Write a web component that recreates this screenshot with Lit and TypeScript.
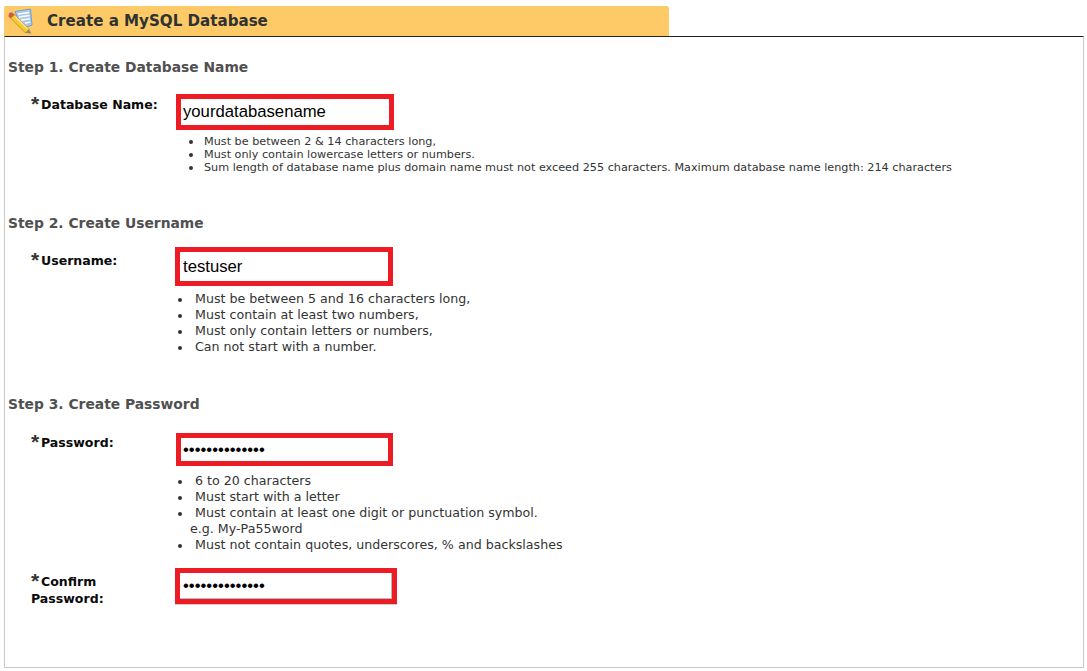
import { LitElement, html, css } from "lit";
import { customElement } from "lit/decorators.js";

@customElement("app-root")
export class AppRoot extends LitElement {
  static styles = css`
    :host { display: block; width: 1087px; height: 671px; background: #fff; font-family: "DejaVu Sans", Verdana, sans-serif; overflow: hidden; }
    .page { box-sizing: border-box; height: 668px; margin-left: 4px; width: 1080px; padding-top: 6px; display: flex; flex-direction: column; }
    .tab { box-sizing: border-box; width: 665px; height: 30px; flex: none; background: #fdca67; border-radius: 2px 3px 0 0; display: flex; align-items: center; gap: 14px; padding-left: 3px; color: #2f3233; font-size: 15.1px; font-weight: 700; }
    .tab svg { display: block; flex: none; }
    .panel { flex: 1; box-sizing: border-box; border: 1px solid #c8c8c8; border-top: 1px solid #222; padding: 22px 0 0 3px; }
    h2 { margin: 0; font-size: 13.85px; line-height: 16px; font-weight: 700; color: #505050; }
    .field { display: grid; grid-template-columns: 145px 1fr; margin-left: 23px; }
    .label { font-size: 12.55px; line-height: 17px; font-weight: 700; color: #0a0a0a; }
    .star { font-size: 21px; line-height: 10px; font-weight: 700; color: #333; display: inline-block; width: 10px; vertical-align: -2px; font-family: "Liberation Sans", sans-serif; }
    .box { box-sizing: border-box; display: block; border: 5px solid #ed1c24; background: #fff; padding: 0 0 0 2px; margin: 0; outline: none; border-radius: 0; font-family: "Liberation Sans", Arial, sans-serif; font-size: 16.7px; color: #000; }
    .b1 { width: 218px; height: 36px; }
    .b2 { width: 218px; height: 39px; margin-left: -1px; padding-left: 3px; }
    .b3 { width: 217px; height: 33px; }
    .b4 { width: 222px; height: 36px; margin-left: -1px; padding-left: 3px; box-shadow: inset -1px -1px 0 #bbb, 0 1px 0 #ccc; }
    ul { margin: 0; padding: 0; list-style: none; color: #333; }
    li { position: relative; }
    li::before { content: ""; position: absolute; border-radius: 50%; background: #333; }
    .small { margin-top: 5px; padding-left: 28px; font-size: 11.22px; line-height: 13px; }
    .small li::before { width: 4px; height: 4px; left: -15px; top: 5px; }
    .big { padding-left: 19px; font-size: 12.65px; line-height: 16px; }
    .big li::before { width: 4px; height: 4px; left: -17px; top: 7px; }
    .big li.note::before { display: none; }
    .big li.note { margin-left: -5px; }
    .l2 { margin-top: 5px; }
    .l3 { margin-top: 7px; }
    .s2 { margin-top: 41px; }
    .s3 { margin-top: 41px; }
    .f1 { margin-top: 19px; }
    .f2 { margin-top: 16px; }
    .f3 { margin-top: 21px; }
    .f4 { margin-top: 15px; }
    .lb1 { padding-top: 2px; }
    .lb2 { padding-top: 5px; }
    .lb3 { padding-top: 1px; }
    .lb4 { padding-top: 5px; }
  `;

  private star() {
    return html`<span class="star">*</span>`;
  }

  render() {
    return html`
      <div class="page">
        <div class="tab">
          <svg width="26" height="26" viewBox="0 0 26 26">
            <path d="M8 3.5 L23.5 1 L25 17 L20 19 L12 14 Z" fill="#a9c8ea" stroke="#6f9fd2" stroke-width="1"/>
            <path d="M11 6 L22 4.5 M12 9 L22.5 7.5 M14 12 L23 10.8 M18 15 L23.3 14.2" stroke="#fff" stroke-width="1.3"/>
            <path d="M7 6.5 L22 21.5 L18.5 25 L3.5 10 Z" fill="#f6c82e" stroke="#b98a1e" stroke-width="0.8"/>
            <path d="M3.5 10 L2 8.5 Q1.5 6.5 3 5 Q5 3.8 7 6.5 Z" fill="#e2574c" stroke="#a8433b" stroke-width="0.6"/>
            <path d="M8 8.5 L20.5 21" stroke="#fbe68a" stroke-width="1.4"/>
            <path d="M22 21.5 L24.5 25.5 L18.5 25 Z" fill="#8d8778"/>
          </svg>
          <span>Create a MySQL Database</span>
        </div>
        <div class="panel">
          <h2>Step 1. Create Database Name</h2>
          <div class="field f1">
            <div class="label lb1">${this.star()}Database Name:</div>
            <div>
              <input class="box b1" .value=${"yourdatabasename"} />
              <ul class="small">
                <li>Must be between 2 &amp; 14 characters long,</li>
                <li>Must only contain lowercase letters or numbers.</li>
                <li>Sum length of database name plus domain name must not exceed 255 characters. Maximum database name length: 214 characters</li>
              </ul>
            </div>
          </div>

          <h2 class="s2">Step 2. Create Username</h2>
          <div class="field f2">
            <div class="label lb2">${this.star()}Username:</div>
            <div>
              <input class="box b2" .value=${"testuser"} />
              <ul class="big l2">
                <li>Must be between 5 and 16 characters long,</li>
                <li>Must contain at least two numbers,</li>
                <li>Must only contain letters or numbers,</li>
                <li>Can not start with a number.</li>
              </ul>
            </div>
          </div>

          <h2 class="s3">Step 3. Create Password</h2>
          <div class="field f3">
            <div class="label lb3">${this.star()}Password:</div>
            <div>
              <input class="box b3" type="password" .value=${"yourpassword12"} />
              <ul class="big l3">
                <li>6 to 20 characters</li>
                <li>Must start with a letter</li>
                <li>Must contain at least one digit or punctuation symbol.</li>
                <li class="note">e.g. My-Pa55word</li>
                <li>Must not contain quotes, underscores, % and backslashes</li>
              </ul>
            </div>
          </div>
          <div class="field f4">
            <div class="label lb4">${this.star()}Confirm<br />Password:</div>
            <div>
              <input class="box b4" type="password" .value=${"yourpassword12"} />
            </div>
          </div>
        </div>
      </div>
    `;
  }
}
